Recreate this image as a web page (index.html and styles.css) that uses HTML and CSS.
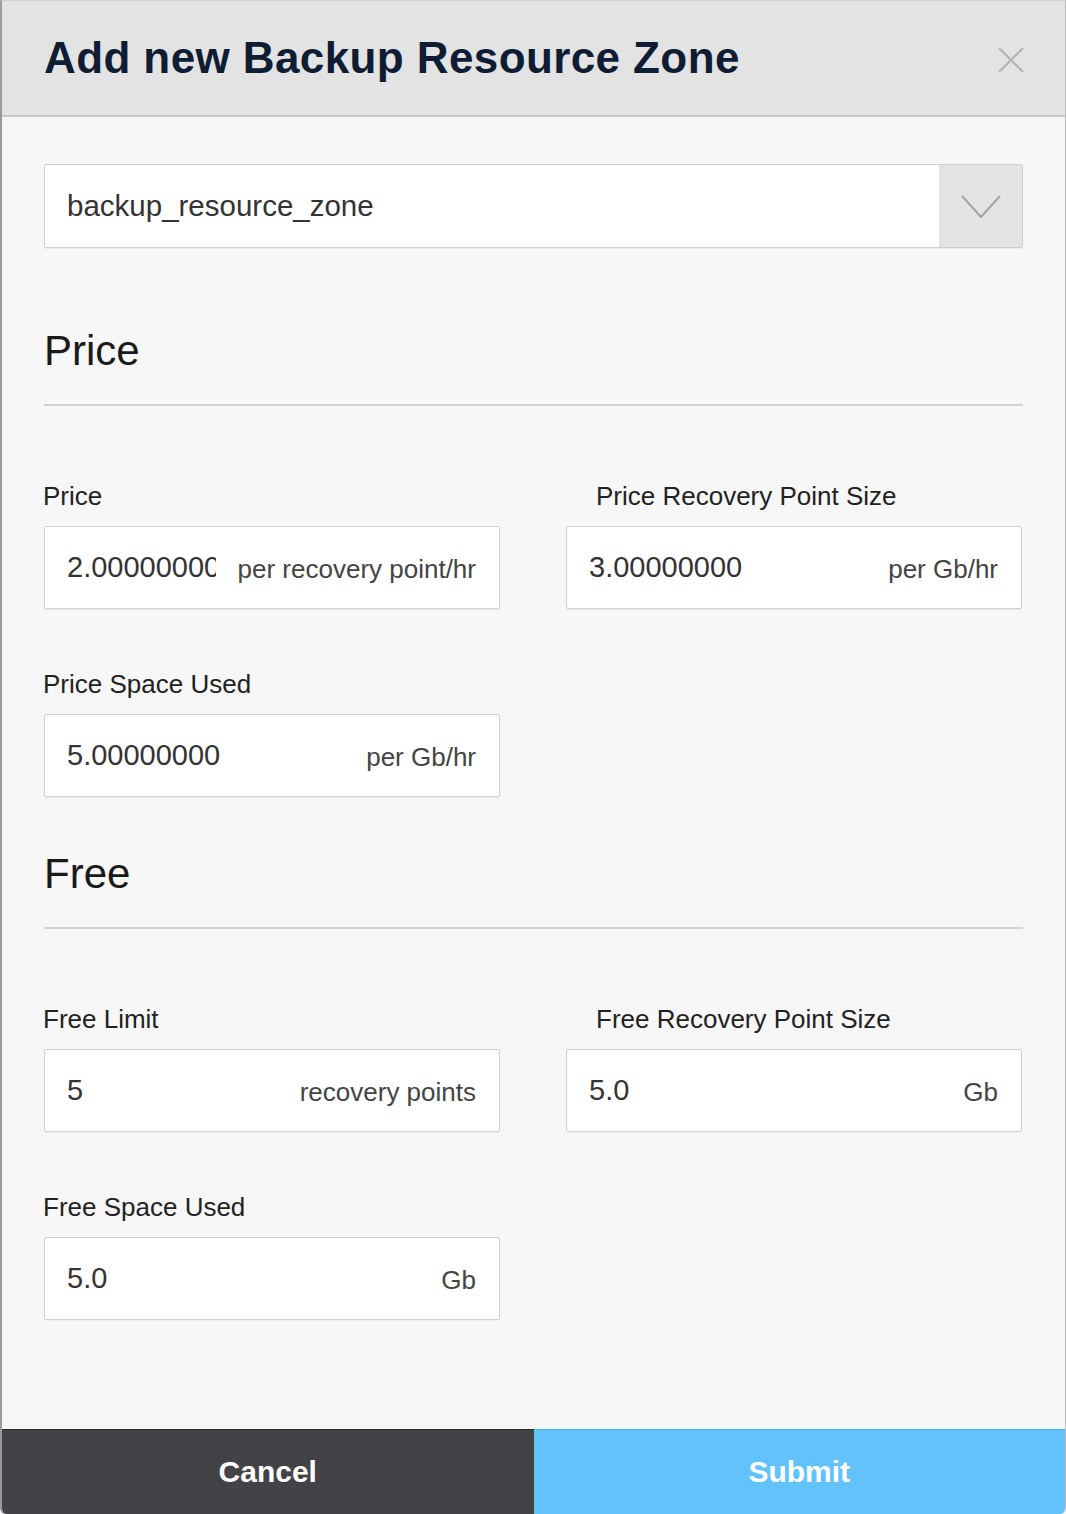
FILE: index.html
```html
<!DOCTYPE html>
<html lang="en">
<head>
<meta charset="utf-8">
<title>Add new Backup Resource Zone</title>
<link rel="stylesheet" href="styles.css">
</head>
<body>
<div class="modal">
  <header class="modal-header">
    <h1 class="modal-title">Add new Backup Resource Zone</h1>
    <button class="close-btn" aria-label="Close">
      <svg width="28" height="28" viewBox="0 0 28 28"><path d="M2 2 L26 26 M26 2 L2 26" stroke="#b4b4b4" stroke-width="2.2" fill="none"/></svg>
    </button>
  </header>

  <main class="modal-body">
    <div class="select">
      <span class="select-value">backup_resource_zone</span>
      <span class="select-arrow">
        <svg width="40" height="24" viewBox="0 0 40 24"><path d="M1 1 L20 22 L39 1" stroke="#a3a3a3" stroke-width="2" fill="none"/></svg>
      </span>
    </div>

    <section class="section section-price">
      <h2 class="section-title">Price</h2>
      <div class="grid">
        <div class="field">
          <label class="label">Price</label>
          <div class="input"><span class="value">2.00000000</span><span class="suffix">per recovery point/hr</span></div>
        </div>
        <div class="field field-right">
          <label class="label">Price Recovery Point Size</label>
          <div class="input"><span class="value">3.00000000</span><span class="suffix">per Gb/hr</span></div>
        </div>
        <div class="field">
          <label class="label">Price Space Used</label>
          <div class="input"><span class="value">5.00000000</span><span class="suffix">per Gb/hr</span></div>
        </div>
      </div>
    </section>

    <section class="section section-free">
      <h2 class="section-title">Free</h2>
      <div class="grid">
        <div class="field">
          <label class="label">Free Limit</label>
          <div class="input"><span class="value">5</span><span class="suffix">recovery points</span></div>
        </div>
        <div class="field field-right">
          <label class="label">Free Recovery Point Size</label>
          <div class="input"><span class="value">5.0</span><span class="suffix">Gb</span></div>
        </div>
        <div class="field">
          <label class="label">Free Space Used</label>
          <div class="input"><span class="value">5.0</span><span class="suffix">Gb</span></div>
        </div>
      </div>
    </section>
  </main>

  <footer class="modal-footer">
    <button class="btn btn-cancel">Cancel</button>
    <button class="btn btn-submit">Submit</button>
  </footer>
</div>
</body>
</html>
```

FILE: styles.css
```css
* { box-sizing: border-box; }
html, body { margin: 0; padding: 0; }
body {
  font-family: "Liberation Sans", Arial, Helvetica, sans-serif;
  background: #f7f7f7;
  width: 1066px;
  height: 1514px;
  overflow: hidden;
}
.modal {
  width: 1066px;
  height: 1514px;
  display: flex;
  flex-direction: column;
  background: #f7f7f7;
  border-left: 2px solid #9a9a9a;
  border-right: 1px solid #bbbbbb;
  border-top: 1px solid #cfcfcf;
  border-radius: 0 0 6px 6px;
  overflow: hidden;
}
.modal-header {
  height: 116px;
  flex: none;
  display: flex;
  align-items: center;
  justify-content: space-between;
  background: #e3e3e3;
  border-bottom: 2px solid #c9c9c9;
  padding: 0 40px 0 42px;
}
.modal-title {
  margin: 0;
  font-size: 44px;
  line-height: 52px;
  font-weight: 700;
  color: #0e1c34;
  letter-spacing: 0.4px;
}
.close-btn {
  background: none;
  border: 0;
  padding: 0;
  width: 28px;
  height: 28px;
  margin-top: 4px;
  display: flex;
}
.modal-body {
  flex: 1;
  padding: 47px 42px 0 42px;
}
.select {
  height: 84px;
  display: flex;
  background: #ffffff;
  border: 1px solid #cfcfcf;
  border-radius: 2px;
  box-shadow: 0 1px 1px rgba(0,0,0,0.06);
}
.select-value {
  flex: 1;
  display: flex;
  align-items: center;
  padding-left: 22px;
  font-size: 29.5px;
  color: #333333;
}
.select-arrow {
  width: 83px;
  flex: none;
  background: #e4e4e4;
  display: flex;
  align-items: center;
  justify-content: center;
  padding-top: 2px;
}
.section-title {
  margin: 0;
  font-size: 42px;
  line-height: 48px;
  font-weight: 400;
  color: #1a1a1a;
  padding-bottom: 29px;
  border-bottom: 2px solid #d3d3d3;
}
.section-price { margin-top: 79px; }
.section-free { margin-top: 53px; }
.grid {
  display: grid;
  grid-template-columns: 456px 456px;
  column-gap: 66px;
  row-gap: 60px;
  padding-top: 75px;
}
.field { display: flex; flex-direction: column; }
.label {
  font-size: 26px;
  line-height: 30px;
  color: #222222;
  margin-bottom: 15px;
  margin-left: -1px;
}
.field-right .label { margin-left: 30px; }
.input {
  height: 83px;
  display: flex;
  align-items: center;
  background: #ffffff;
  border: 1px solid #d0d0d0;
  border-radius: 2px;
  padding: 0 23px 0 22px;
  box-shadow: 0 1px 1px rgba(0,0,0,0.05);
}
.value {
  flex: 1;
  min-width: 0;
  overflow: hidden;
  white-space: nowrap;
  font-size: 29px;
  color: #333333;
}
.suffix {
  flex: none;
  margin-left: 22px;
  font-size: 26px;
  color: #444444;
  white-space: nowrap;
  padding-top: 3px;
}
.modal-footer {
  height: 85px;
  flex: none;
  display: flex;
}
.btn {
  flex: 1;
  border: 0;
  margin: 0;
  font-family: "Liberation Sans", Arial, Helvetica, sans-serif;
  font-size: 30px;
  font-weight: 700;
  color: #ffffff;
  padding: 0;
}
.btn-cancel {
  background: #434247;
  border-top: 1px solid #2a2a2e;
}
.btn-submit {
  background: #62c3fc;
  border-top: 1px solid #4fb3ee;
}
```
